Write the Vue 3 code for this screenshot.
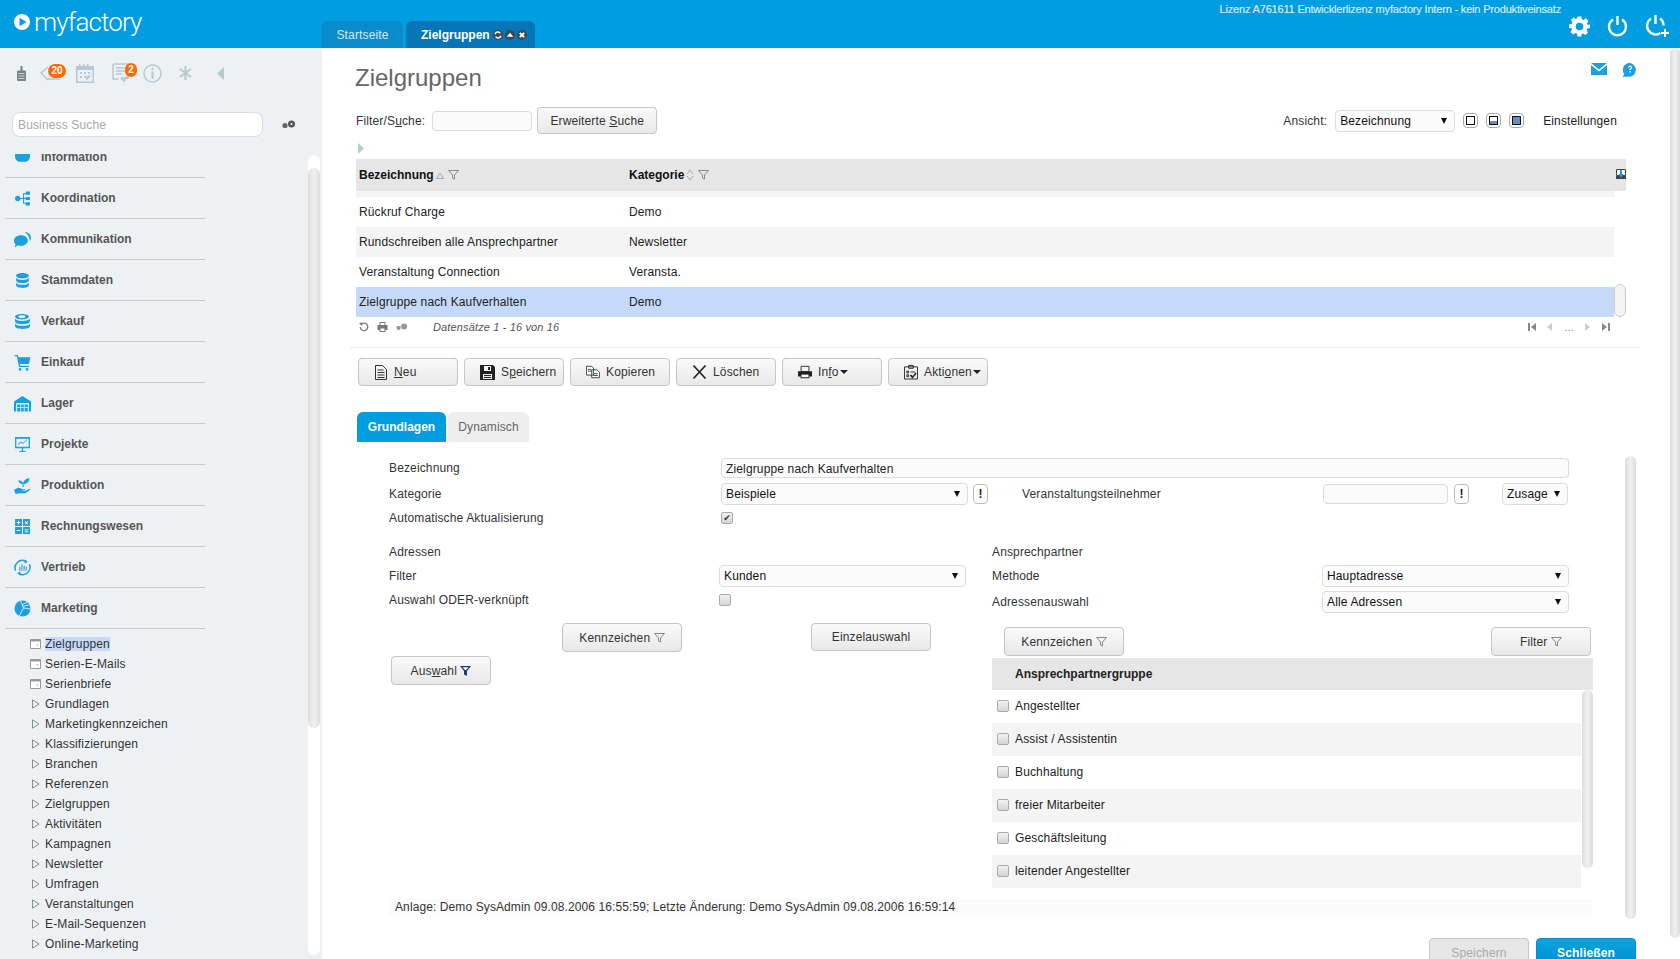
<template>
  <div class="app">
    <header class="topbar">
      <div class="logo">
        <svg width="16" height="16" viewBox="0 0 16 16"><path fill="#fff" fill-rule="evenodd" d="M8 0a8 8 0 1 1 0 16A8 8 0 0 1 8 0zM5.500 3.800v8.400L12.500 8z"/></svg>
        <span class="logo-text">myfactory</span>
      </div>
      <nav class="tabs">
        <div class="tab">Startseite</div>
        <div class="tab tab-active">
          Zielgruppen
          <span class="tab-tools">
            <svg width="10" height="10" viewBox="0 0 10 10"><circle cx="5" cy="5" r="5" fill="#3b4a55"/><path d="M2 4.200a3 3 0 0 1 5.400-.8M8 5.800a3 3 0 0 1-5.400.8" fill="none" stroke="#fff" stroke-width="1.400"/></svg>
            <svg width="10" height="10" viewBox="0 0 10 10"><circle cx="5" cy="5" r="5" fill="#3b4a55"/><path d="M1.800 6.800L5 2.800l3.200 4z" fill="#fff"/></svg>
            <svg width="10" height="10" viewBox="0 0 10 10"><circle cx="5" cy="5" r="5" fill="#3b4a55"/><path d="M2.800 2.800l4.400 4.400M7.200 2.800l-4.400 4.400" stroke="#fff" stroke-width="1.900"/></svg>
          </span>
        </div>
      </nav>
      <div class="top-right">
        <div class="licence">Lizenz A761611 Entwicklerlizenz myfactory Intern - kein Produktiveinsatz</div>
        <div class="top-icons">
          <svg width="21" height="22" viewBox="0 0 22 22"><path fill="#fff" fill-rule="evenodd" d="M9 1h4l.5 2.800 1.800.8 2.400-1.600 2.800 2.800-1.600 2.400.8 1.800L22 9.500v3.500l-2.800.5-.8 1.800 1.600 2.400-2.800 2.800-2.400-1.600-1.800.8L13 22H9l-.5-2.800-1.800-.8-2.400 1.600-2.800-2.800 1.600-2.400-.8-1.800L0 13V9.500l2.800-.5.800-1.800L2 4.800 4.800 2l2.400 1.600 1.300-.8zM11 7.500a4 4 0 1 0 0 8 4 4 0 0 0 0-8z"/></svg>
          <svg width="21" height="22" viewBox="0 0 21 22"><path fill="none" stroke="#fff" stroke-width="2.400" d="M6 4.500a8.500 8.500 0 1 0 9 0M10.500 1v9"/></svg>
          <svg width="24" height="24" viewBox="0 0 24 24"><path fill="none" stroke="#fff" stroke-width="2.400" d="M6 4.500a8.500 8.500 0 1 0 9.500 14.500M15 4.500a8.500 8.500 0 0 1 3.500 7M10.500 1v9"/><path fill="#fff" d="M19 15h2v3h3v2h-3v3h-2v-3h-3v-2h3z"/></svg>
        </div>
      </div>
    </header>

    <div class="content">
      <aside class="sidebar">
        <div class="quick-icons">
          <svg class="qi-hand" width="9" height="15" viewBox="0 0 9 15"><path fill="#77838a" d="M3.500 0h2v4.500h2c1 0 1.500.5 1.500 1.500v7.500c0 1-.5 1.500-1.500 1.500h-6C.5 15 0 14.500 0 13.500V6c0-1 .5-1.500 1.500-1.500h2z"/><path stroke="#edf1f4" stroke-width=".7" d="M1.500 7.500h6M1.500 10h6M1.500 12.500h6"/></svg>
          <span class="qi-wrap qi-mail">
            <svg width="21" height="18" viewBox="0 0 21 18"><path fill="none" stroke="#b5c9d3" stroke-width="1.500" d="M8 3L1 9l6 6h13M4 12l4 4"/></svg>
            <span class="badge badge-wide">20</span>
          </span>
          <svg class="qi-cal" width="20" height="20" viewBox="0 0 20 20"><path fill="#b5c9d3" fill-rule="evenodd" d="M1 3h3V1h1.500v2h2.500V1h1.500v2h2.500V1h1.500v2H19v17H1zM2.500 7v11.500h15V7zM5 9h2v2H5zM9 9h2v2H9zM13 9h2v2h-2zM5 13h2v2H5zM9 13h2v2H9zM13 12l3 1-4 4h-1v-2z"/></svg>
          <span class="qi-wrap qi-task">
            <svg width="19" height="20" viewBox="0 0 19 20"><path fill="none" stroke="#b5c9d3" stroke-width="1.500" d="M1 1h15v14H9M1 1v15h6M4 5h9M4 8h9M4 11h6"/><path fill="none" stroke="#b5c9d3" stroke-width="1.800" d="M9 15l3 3 3-4"/></svg>
            <span class="badge">2</span>
          </span>
          <svg class="qi-info" width="19" height="19" viewBox="0 0 19 19"><circle cx="9.500" cy="9.500" r="8.500" fill="none" stroke="#b5c9d3" stroke-width="1.500"/><path fill="#b5c9d3" d="M8.500 4h2v2h-2zM8.500 7.500h2V15h-2z"/></svg>
          <svg class="qi-star" width="13" height="14" viewBox="0 0 13 14"><path stroke="#b5c9d3" stroke-width="2" d="M6.500 0v14M1 3l11 8M12 3L1 11"/></svg>
          <svg class="qi-back" width="8" height="13" viewBox="0 0 8 13"><path fill="#b5c9d3" d="M7 0v13L0 6.500z"/></svg>
        </div>
        <div class="search-row">
          <input class="search" placeholder="Business Suche">
          <svg width="14" height="9" viewBox="0 0 14 9"><circle cx="3" cy="5.500" r="2.600" fill="#666"/><circle cx="9.500" cy="4" r="3.500" fill="#555"/><circle cx="9.500" cy="4" r="1.100" fill="#edf1f4"/></svg>
        </div>
        <div class="nav-clip">
          <ul class="nav">
            <li v-for="item in navItems" :key="item.label" class="nav-item">
              <svg class="nav-icon" width="17" height="17" viewBox="0 0 16 16">
                <path :d="item.d" fill="#1a9fe0" fill-rule="evenodd" />
                <path v-if="item.line" :d="item.line" fill="none" stroke="#1a9fe0" stroke-width="1.400" />
                <path v-if="item.cut" :d="item.cut" fill="none" stroke="#edf1f4" stroke-width="0.800" />
              </svg>
              <span>{{ item.label }}</span>
            </li>
          </ul>
          <ul class="subnav">
            <li v-for="(sub, index) in subItems" :key="index" class="sub-item">
              <svg v-if="index < 3" width="11" height="10" viewBox="0 0 11 10"><path fill="#fff" stroke="#999" d="M.5.500h10v9H.500z"/><path fill="#999" d="M.5.500h10v2H.500zM6 5l2 2v-1.500z"/></svg>
              <svg v-else width="11" height="10" viewBox="0 0 11 10"><path fill="none" stroke="#8a8a8a" d="M2.500.800v8.400L9 5z"/></svg>
              <span :class="{ 'sub-current': index === 0 }">{{ sub }}</span>
            </li>
          </ul>
        </div>
        <div class="side-scroll"><div class="side-thumb"></div></div>
      </aside>

      <main class="main">
        <div class="title-row">
          <h1>Zielgruppen</h1>
          <div class="title-icons">
            <svg width="16" height="12" viewBox="0 0 16 12"><path fill="#1a9fe0" d="M0 0h16L8 6.500zM0 2l8 6.500L16 2v10H0z"/></svg>
            <svg width="15" height="14" viewBox="0 0 15 14"><path fill="#1a9fe0" fill-rule="evenodd" d="M8 0a7 7 0 0 1 0 13.800H0c1.500-.6 2-1.800 2-3A7 7 0 0 1 8 0zM6 4.500h1.200c0-1 1.600-1 1.600 0 0 .8-1.400 1-1.400 2.600h1.300c0-1.300 1.500-1.400 1.500-2.800 0-2.200-4.200-2.200-4.200.2zM7.400 8v1.400h1.300V8z"/></svg>
          </div>
        </div>

        <div class="filter-row">
          <label>Filter/S<u>u</u>che:</label>
          <input class="field filter-input">
          <button class="btn search-btn">Erweiterte <u>S</u>uche</button>
          <label class="view-label">Ansicht:</label>
          <div class="select view-select"><select><option>Bezeichnung</option></select></div>
          <div class="view-btns">
            <span class="view-btn"><i class="pane"></i></span>
            <span class="view-btn"><i class="pane pane-half"></i></span>
            <span class="view-btn"><i class="pane pane-full"></i></span>
          </div>
          <span class="settings">Einstellungen</span>
        </div>

        <svg class="expand" width="6" height="11" viewBox="0 0 6 11"><path fill="#b5cbd8" d="M0 0l6 5.500L0 11z"/></svg>

        <div class="grid-head">
          <div class="col-one">
            <b>Bezeichnung</b>
            <svg width="8" height="7" viewBox="0 0 8 7"><path fill="none" stroke="#aaa" d="M.5 6.500L4 1l3.500 5.500z"/></svg>
            <svg class="funnel" width="11" height="10" viewBox="0 0 11 10"><path fill="none" stroke="#888" d="M.5.500h10L6.500 5v4l-2-1V5z"/></svg>
          </div>
          <div class="col-two">
            <b>Kategorie</b>
            <svg width="8" height="12" viewBox="0 0 8 12"><path fill="none" stroke="#aaa" d="M1 5l3-4 3 4M1 7l3 4 3-4"/></svg>
            <svg class="funnel" width="11" height="10" viewBox="0 0 11 10"><path fill="none" stroke="#888" d="M.5.500h10L6.500 5v4l-2-1V5z"/></svg>
          </div>
          <svg class="export" width="10" height="10" viewBox="0 0 10 10"><path fill="#fff" stroke="#444" d="M.5.500h9v6h-9z"/><path fill="#444" d="M0 7h10v3H0z"/><path fill="#1a9fe0" d="M4 1h2v4h1.500L5 9 2.500 5H4z"/></svg>
        </div>
        <div class="grid-body">
          <div class="grid-strip"></div>
          <div v-for="(row, index) in rows" :key="row.name" class="grid-row" :class="{ odd: index === 1, selected: index === 3 }">
            <div class="col-one">{{ row.name }}</div>
            <div class="col-two">{{ row.cat }}</div>
          </div>
          <div class="grid-thumb"></div>
        </div>
        <div class="grid-foot">
          <svg width="10" height="10" viewBox="0 0 10 10"><path fill="none" stroke="#777" stroke-width="1.300" d="M2 2.500A3.800 3.800 0 1 1 1.200 5"/><path fill="#777" d="M0 1l3.500-.500L3 4z"/></svg>
          <svg width="11" height="10" viewBox="0 0 11 10"><path fill="#777" d="M2.500 0h6v3h2v5h-2v2h-6V8h-2V3h2zM3.500 1v2h4V1zM3.500 6.500V9h4V6.500z"/></svg>
          <svg width="12" height="8" viewBox="0 0 14 9"><circle cx="3" cy="5.500" r="2.600" fill="#999"/><circle cx="9.500" cy="4" r="3.500" fill="#999"/></svg>
          <span class="records">Datensätze 1 - 16 von 16</span>
          <div class="pager">
            <svg width="8" height="8" viewBox="0 0 8 8"><path fill="#888" d="M0 0h2v8H0zM8 0v8L3 4z"/></svg>
            <svg width="6" height="8" viewBox="0 0 6 8"><path fill="#ccc" d="M5 0v8L0 4z"/></svg>
            <span>...</span>
            <svg width="6" height="8" viewBox="0 0 6 8"><path fill="#ccc" d="M0 0v8l5-4z"/></svg>
            <svg width="8" height="8" viewBox="0 0 8 8"><path fill="#888" d="M0 0v8l5-4zM6 0h2v8H6z"/></svg>
          </div>
        </div>
        <div class="dotted"></div>

        <div class="actions">
          <button class="btn act-btn">
            <svg width="14" height="15" viewBox="0 0 14 15"><path fill="none" stroke="#333" d="M1.500.500h7l4 4v10h-11zM3.500 5h6M3.500 7.500h7M3.500 10h7M3.500 12.500h7"/></svg>
            <span><u>N</u>eu</span>
          </button>
          <button class="btn act-btn">
            <svg width="15" height="15" viewBox="0 0 15 15"><path fill="#222" fill-rule="evenodd" d="M0 0h13l2 2v13H0zM4 1v5h7V1zM8 2h2v3H8zM3 9v5h9V9zM4 10h7v1H4zM4 12h7v1H4z"/></svg>
            <span>S<u>p</u>eichern</span>
          </button>
          <button class="btn act-btn">
            <svg width="14" height="14" viewBox="0 0 16 14"><path fill="#fff" stroke="#333" d="M.5.500h6l2 2v8h-8zM6.500 4.500h6l3 3v6h-9z"/><path stroke="#333" d="M2 4h4M2 6h4M8.500 9h5M8.500 11h5"/></svg>
            <span>Kopieren</span>
          </button>
          <button class="btn act-btn">
            <svg width="15" height="14" viewBox="0 0 14 14"><path stroke="#222" stroke-width="1.600" d="M1 .500l12 13M13 .500l-12 13"/></svg>
            <span>Löschen</span>
          </button>
          <button class="btn act-btn">
            <svg width="14" height="14" viewBox="0 0 16 14"><path fill="none" stroke="#222" d="M3.500.500h9v6h-9z"/><path fill="#222" d="M0 6h16v6h-3v2H3v-2H0z"/><path fill="#fff" d="M4 10h8v3H4z"/></svg>
            <span class="caret-text">In<u>f</u>o<i class="caret"></i></span>
          </button>
          <button class="btn act-btn">
            <svg width="14" height="16" viewBox="0 0 15 16"><path fill="none" stroke="#222" d="M.5 2.500h14v13H.500zM5 1h5v3H5zM3 7h2v2H3zM3 11h2v2H3zM7 8h5M7 12h2"/><path fill="none" stroke="#222" stroke-width="1.600" d="M7 11l2 3 4-5"/></svg>
            <span class="caret-text">Akti<u>o</u>nen<i class="caret"></i></span>
          </button>
        </div>

        <div class="form-tabs">
          <div class="form-tab form-tab-active">Grundlagen</div>
          <div class="form-tab">Dynamisch</div>
        </div>

        <section class="form">
          <div class="form-row row-name">
            <span class="form-label">Bezeichnung</span>
            <input class="field name-input" value="Zielgruppe nach Kaufverhalten">
          </div>
          <div class="form-row row-cat">
            <span class="form-label">Kategorie</span>
            <div class="select cat-select"><select><option>Beispiele</option></select></div>
            <button class="bang">!</button>
            <span class="guest-label">Veranstaltungsteilnehmer</span>
            <input class="field guest-input">
            <button class="bang guest-bang">!</button>
            <div class="select zusage-select"><select><option>Zusage</option></select></div>
          </div>
          <div class="form-row row-auto">
            <span class="form-label">Automatische Aktualisierung</span>
            <input class="check" type="checkbox" checked>
          </div>

          <div class="columns">
            <div class="col-left">
              <div class="line">Adressen</div>
              <div class="form-row row-select left-row">
                <span class="left-label">Filter</span>
                <div class="select wide-select"><select><option>Kunden</option></select></div>
              </div>
              <div class="form-row row-or left-row">
                <span class="left-label">Auswahl ODER-verknüpft</span>
                <input class="check" type="checkbox">
              </div>
              <div class="left-btns">
                <button class="btn flag-btn">Kennzeichen <svg width="11" height="10" viewBox="0 0 11 10"><path fill="none" stroke="#888" d="M.5.500h10L6.500 5v4l-2-1V5z"/></svg></button>
                <button class="btn single-btn">Einzelauswahl</button>
              </div>
              <button class="btn pick-btn">Aus<u>w</u>ahl <svg width="11" height="10" viewBox="0 0 11 10"><path fill="#1b3a7a" d="M0 0h11L7 5v5L4 8.500V5z"/><path fill="#fff" d="M2.500 1.200h6L6 4H5z"/></svg></button>
            </div>

            <div class="col-right">
              <div class="line">Ansprechpartner</div>
              <div class="form-row row-select right-row">
                <span class="right-label">Methode</span>
                <div class="select wide-select"><select><option>Hauptadresse</option></select></div>
              </div>
              <div class="form-row row-select right-row row-addr">
                <span class="right-label">Adressenauswahl</span>
                <div class="select wide-select"><select><option>Alle Adressen</option></select></div>
              </div>
              <div class="right-btns">
                <button class="btn flag-btn">Kennzeichen <svg width="11" height="10" viewBox="0 0 11 10"><path fill="none" stroke="#888" d="M.5.500h10L6.500 5v4l-2-1V5z"/></svg></button>
                <button class="btn filter-btn">Filter <svg width="11" height="10" viewBox="0 0 11 10"><path fill="none" stroke="#888" d="M.5.500h10L6.500 5v4l-2-1V5z"/></svg></button>
              </div>
              <div class="group-head">Ansprechpartnergruppe</div>
              <div class="group-list">
                <div v-for="(group, index) in groups" :key="group" class="group-row" :class="{ odd: index % 2 === 1 }">
                  <input class="check" type="checkbox">
                  <span>{{ group }}</span>
                </div>
                <div class="group-thumb"></div>
              </div>
            </div>
          </div>

          <div class="created">Anlage: Demo SysAdmin 09.08.2006 16:55:59; Letzte Änderung: Demo SysAdmin 09.08.2006 16:59:14</div>
          <div class="form-scroll"></div>
        </section>

        <div class="bottom-btns">
          <button class="btn bottom-btn disabled">Speichern</button>
          <button class="btn bottom-btn primary">Schließen</button>
        </div>
        <div class="page-scroll"></div>
      </main>
    </div>
  </div>
</template>

<script setup>
const navItems = [
  { label: 'Information', d: 'M1 1h5l2 2 2-2h5v6c0 3-2 5-5 5H6c-3 0-5-2-5-5z' },
  { label: 'Koordination', d: 'M1 8a2.500 2.500 0 1 0 5 0 2.500 2.500 0 1 0-5 0zM6 7.500h2.500V3H11v1h-1.500v3.500H11v1H9.500V12H11v1H8.500V8.500H6zM11 1.500h4v3h-4zM11 6.500h4v3h-4zM11 11.500h4v3h-4z' },
  { label: 'Kommunikation', d: 'M0 9c0-3 3-5 6.500-5S13 6 13 9s-3 5-6.500 5c-1 0-2-.2-2.800-.5L.5 15.500l1-3C.5 11.500 0 10.300 0 9zM10 1c3.500 0 6 2.500 6 5.500 0 1.200-.4 2.300-1.100 3.200.1-3.500-2-7-4.900-8.700z' },
  { label: 'Stammdaten', d: 'M2 3.500C2 2 5 1 8 1s6 1 6 2.500S11 6 8 6 2 5 2 3.500zM2 5.500C3 7 5.500 7.500 8 7.500s5-.5 6-2V8c0 1.500-3 2.500-6 2.500S2 9.500 2 8zM2 10c1 1.500 3.500 2 6 2s5-.5 6-2v2.500c0 1.500-3 2.500-6 2.500s-6-1-6-2.500z' },
  { label: 'Verkauf', d: 'M1 3.500C1 2 4 1 7.500 1S14 2 14 3.500 11 6 7.500 6 1 5 1 3.500zM4 3.500c0 .8 1.500 1.300 3.500 1.300s3.500-.5 3.500-1.300-1.500-1.300-3.500-1.300S4 2.700 4 3.500zM1 5.500C2 7 4.500 7.500 7.500 7.500s6-.5 7.500-2V8c0 1.500-3.500 2.500-7.500 2.500S1 9.500 1 8zM1 10c1 1.500 3.500 2 7 2s6-.5 7-2v2.500c0 1.500-3 2.500-7 2.500s-7-1-7-2.500z' },
  { label: 'Einkauf', d: 'M.5 1h3.200l.6 2H15.500L14 9.500H5.500l.3 1.500H14v1.200H4.700L2.700 2.200H.5zM4.500 14.500a1.300 1.300 0 1 0 2.600 0 1.300 1.300 0 1 0-2.600 0zM11 14.500a1.300 1.300 0 1 0 2.600 0 1.300 1.300 0 1 0-2.600 0z' },
  { label: 'Lager', d: 'M0 6l8-5 8 5v9.500h-2V7.500H2v8H0zM3 9h3v2.500H3zM6.800 9h2.400v2.500H6.800zM10 9h3v2.500h-3zM3 12.300h3v3.200H3zM6.800 12.300h2.400v3.200H6.800zM10 12.300h3v3.200h-3z' },
  { label: 'Projekte', d: 'M1 1h14v10.500H1zM2.200 2.500v7.500h11.600V2.500zM7.400 11.500h1.200V14H11v1H5v-1h2.400zM3.500 8l3-3 2 1.500 3.500-3.500.5.5-4 4-2-1.500L4 8.500z' },
  { label: 'Produktion', d: 'M0 12l3-1.500c1-.5 2-.3 3 .2l2 .8h2c.8 0 .8 1.200 0 1.200H7.500l.5.500h2.500l4-2c.8-.3 1.200.5.5 1l-4.500 3H5L1.500 16zM8 9.500V6.500C6 6.500 4.500 5.500 4 3c2.500 0 4 1 4.500 3C9 3.500 11 1.500 14.500 1c0 3.500-2 5.500-5.500 5.800V9.500z' },
  { label: 'Rechnungswesen', d: 'M1 1h6.500v6.500H1zM8.500 1H15v6.500H8.500zM1 8.500h6.500V15H1zM8.500 8.500H15V15H8.500zM3.700 2.500h1v1.300H6v1H4.700v1.300h-1V4.800H2.500v-1h1.200zM10.500 2.800l1.200 1.200 1.200-1.200.6.600-1.200 1.200 1.200 1.200-.6.600-1.200-1.200-1.200 1.200-.6-.6 1.200-1.200-1.200-1.200zM2.500 11.200H6v1H2.500zM10 10.500h3.500v1H10zM10 12.500h3.500v1H10z' },
  { label: 'Vertrieb', d: 'M5 7h1v4H5zM7 5h1v6H7zM9 6h1v5H9zM11 7h1v4h-1zM10 .5l3 2-3 2zM6 11.500l-3 2 3 2z', line: 'M1.500 11A7 7 0 0 1 11 2M14.500 5A7 7 0 0 1 5 14' },
  { label: 'Marketing', d: 'M8 .5a7.500 7.500 0 1 1 0 15 7.500 7.500 0 0 1 0-15z', cut: 'M5 15L9 7.500l6.500 1M9 7.500L6 .5M7.500 4.500l5-2.500M8.500 6l6-1.500' },
];

const subItems = [
  'Zielgruppen', 'Serien-E-Mails', 'Serienbriefe', 'Grundlagen', 'Marketingkennzeichen',
  'Klassifizierungen', 'Branchen', 'Referenzen', 'Zielgruppen', 'Aktivitäten', 'Kampagnen',
  'Newsletter', 'Umfragen', 'Veranstaltungen', 'E-Mail-Sequenzen', 'Online-Marketing',
];

const rows = [
  { name: 'Rückruf Charge', cat: 'Demo' },
  { name: 'Rundschreiben alle Ansprechpartner', cat: 'Newsletter' },
  { name: 'Veranstaltung Connection', cat: 'Veransta.' },
  { name: 'Zielgruppe nach Kaufverhalten', cat: 'Demo' },
];

const groups = ['Angestellter', 'Assist / Assistentin', 'Buchhaltung', 'freier Mitarbeiter', 'Geschäftsleitung', 'leitender Angestellter'];
</script>

<style>
html, body { margin: 0; background: #fff; }
</style>

<style scoped>
.app {
  width: 1680px;
  height: 959px;
  overflow: hidden;
  font-family: "Liberation Sans", Arial, sans-serif;
  font-size: 12px;
  letter-spacing: 0.14px;
  color: #333;
}
b, .nav-item, .group-head, .tab-active, .form-tab-active, .primary { letter-spacing: 0; }

/* Kopfzeile */
.topbar {
  height: 48px;
  background: #009de0;
  display: flex;
}
.logo {
  width: 322px;
  display: flex;
  align-items: center;
  gap: 4px;
  padding: 0 0 4px 14px;
  box-sizing: border-box;
  color: #fff;
}
.logo-text {
  font-family: Roboto, sans-serif;
  font-weight: 300;
  font-size: 26px;
  letter-spacing: -0.9px;
}
.tabs {
  display: flex;
  align-items: flex-end;
  gap: 3px;
}
.tab {
  height: 27px;
  line-height: 28px;
  width: 81px;
  text-align: center;
  background: #0a8bcc;
  color: #d5ecf7;
  border-radius: 6px 6px 0 0;
}
.tab-active {
  width: 129px;
  box-sizing: border-box;
  padding: 1px 0 0 15px;
  text-align: left;
  background: #0676b8;
  color: #fff;
  font-weight: bold;
  display: flex;
  align-items: center;
  gap: 3px;
}
.tab-tools { display: flex; gap: 2px; }
.top-right {
  flex: 1;
  padding-right: 11px;
  text-align: right;
}
.licence {
  font-size: 11px;
  color: #d3ecf8;
  margin: 3px 0 0;
  padding-right: 108px;
  line-height: 13px;
  letter-spacing: -0.18px;
  -webkit-text-stroke: 0.2px #d3ecf8;
}
.top-icons {
  display: flex;
  justify-content: flex-end;
  align-items: center;
  gap: 17px;
  height: 22px;
  margin-top: -1px;
}

/* Seitenleiste */
.content { display: flex; height: 911px; }
.sidebar {
  width: 322px;
  flex: none;
  background: #edf1f4;
  position: relative;
  overflow: hidden;
}
.quick-icons {
  height: 64px;
  display: flex;
  align-items: center;
  padding: 0 0 14px 17px;
  box-sizing: border-box;
}
.qi-wrap { position: relative; display: block; }
.qi-mail { margin-left: 14px; width: 21px; height: 18px; }
.qi-cal { margin-left: 14px; }
.qi-task { margin-left: 17px; width: 19px; height: 20px; }
.qi-info { margin-left: 12px; }
.qi-star { margin-left: 17px; }
.qi-back { margin-left: 25px; }
.badge {
  position: absolute;
  top: 0;
  left: 13px;
  min-width: 12px;
  height: 14px;
  line-height: 14px;
  border-radius: 7px;
  background: #ff6a00;
  color: #fff;
  font-size: 10px;
  font-weight: bold;
  letter-spacing: 0;
  text-align: center;
}
.qi-mail .badge { left: 8px; }
.badge-wide { min-width: 18px; }
.search-row {
  display: flex;
  align-items: center;
  gap: 19px;
  padding-left: 12px;
  height: 25px;
}
.search {
  width: 251px;
  height: 25px;
  box-sizing: border-box;
  border: 1px solid #dcdcdc;
  border-radius: 8px;
  padding: 0 5px;
  font: 12px "Liberation Sans", Arial, sans-serif;
  letter-spacing: 0.14px;
  outline: none;
}
.search::placeholder { color: #a8a8a8; }
.nav-clip {
  height: 805px;
  margin-top: 17px;
  overflow: hidden;
}
.nav, .subnav { list-style: none; margin: 0; padding: 0; }
.nav { margin-top: -17px; }
.nav-item {
  width: 200px;
  height: 41px;
  box-sizing: border-box;
  margin-left: 5px;
  border-bottom: 1px solid #c8ccd0;
  display: flex;
  align-items: center;
  gap: 10px;
  padding-left: 9px;
  font-weight: bold;
  color: #555;
}
.subnav {
  width: 200px;
  margin-left: 5px;
  padding: 5px 0 5px;
  border-bottom: 1px solid #c8ccd0;
}
.sub-item {
  height: 20px;
  display: flex;
  align-items: center;
  gap: 4px;
  padding-left: 25px;
  color: #333;
}
.sub-current { background: #c4daf8; }
.side-scroll {
  position: absolute;
  left: 308px;
  top: 107px;
  width: 12px;
  height: 800px;
  border-radius: 6px;
  background: #fff;
}
.side-thumb {
  height: 560px;
  margin-top: 13px;
  border-radius: 6px;
  background: linear-gradient(90deg, #dcdcdc, #f0f0f0 50%, #dcdcdc);
}

/* Hauptbereich */
.main {
  flex: 1;
  position: relative;
  overflow: hidden;
  padding-left: 34px;
  background: #fff;
}
.title-row {
  width: 1281px;
  height: 59px;
  display: flex;
  justify-content: space-between;
}
h1 {
  margin: 15px 0 0 -1px;
  font-size: 24px;
  line-height: 30px;
  font-weight: normal;
  letter-spacing: 0;
  color: #666;
}
.title-icons {
  display: flex;
  gap: 15px;
  align-items: flex-start;
  padding-top: 15px;
}
.filter-row {
  width: 1270px;
  height: 27px;
  display: flex;
  align-items: center;
}
.field {
  box-sizing: border-box;
  border: 1px solid #dcdcdc;
  border-radius: 4px;
  background: #fbfbfb;
  font: 12px "Liberation Sans", Arial, sans-serif;
  letter-spacing: 0.14px;
  color: #222;
  outline: none;
}
.filter-input { width: 100px; height: 20px; margin-left: 7px; }
.btn {
  box-sizing: border-box;
  border: 1px solid #c6c6c6;
  border-radius: 4px;
  background: linear-gradient(#fafafa, #e8e8e8);
  font: 12px "Liberation Sans", Arial, sans-serif;
  letter-spacing: 0.14px;
  color: #333;
  padding: 0;
}
.search-btn { width: 120px; height: 27px; margin-left: 5px; }
.view-label { margin-left: auto; }
.select {
  position: relative;
  box-sizing: border-box;
  height: 22px;
}
.select select {
  width: 100%;
  height: 100%;
  box-sizing: border-box;
  border: 1px solid #dcdcdc;
  border-radius: 4px;
  background: #fbfbfb;
  font: 12px "Liberation Sans", Arial, sans-serif;
  letter-spacing: 0.14px;
  color: #111;
  padding: 0 0 0 4px;
  appearance: none;
  outline: none;
}
.select::after {
  content: "";
  position: absolute;
  right: 8px;
  top: 8px;
  border-left: 3px solid transparent;
  border-right: 3px solid transparent;
  border-top: 6px solid #111;
  pointer-events: none;
}
.view-select { width: 120px; margin-left: 8px; }
.view-btns { display: flex; gap: 8px; margin-left: 8px; }
.view-btn {
  width: 15px;
  height: 15px;
  box-sizing: border-box;
  border: 1px solid #aaa;
  border-radius: 4px;
  display: flex;
  align-items: center;
  justify-content: center;
}
.pane {
  display: block;
  width: 9px;
  height: 9px;
  box-sizing: border-box;
  border: 1px solid #111;
  background: #fff;
}
.pane-half { background: linear-gradient(#fff 50%, #6c8ebf 50%); }
.pane-full { background: #6c8ebf; }
.settings { margin-left: 19px; padding-right: 9px; color: #222; }
.expand { display: block; margin: 9px 0 5px 2px; }

.grid-head {
  width: 1270px;
  height: 32px;
  background: #e6e6e6;
  display: flex;
  align-items: center;
  position: relative;
  color: #111;
}
.col-one {
  width: 273px;
  padding-left: 3px;
  box-sizing: border-box;
  display: flex;
  align-items: center;
  gap: 2px;
}
.col-two { display: flex; align-items: center; gap: 2px; }
.funnel { margin-left: 2px; }
.export { position: absolute; right: 0; top: 10px; }
.grid-body { width: 1270px; position: relative; color: #222; }
.grid-strip { width: 1258px; height: 6px; background: #f4f4f4; }
.grid-row {
  width: 1258px;
  height: 30px;
  display: flex;
  align-items: center;
}
.grid-row.odd { background: #f4f4f4; }
.grid-row.selected { background: #c4daf8; }
.grid-thumb {
  position: absolute;
  right: 0;
  bottom: 0;
  width: 12px;
  height: 33px;
  box-sizing: border-box;
  border: 1px solid #ccc;
  border-radius: 6px;
  background: #f3f3f3;
}
.grid-foot {
  width: 1251px;
  height: 20px;
  padding-left: 3px;
  display: flex;
  align-items: center;
  gap: 8px;
}
.records {
  margin-left: 17px;
  font-size: 11px;
  font-style: italic;
  color: #555;
}
.pager {
  margin-left: auto;
  display: flex;
  align-items: center;
  gap: 11px;
  color: #777;
  font-size: 11px;
}
.dotted {
  width: 1289px;
  margin: 10px 0 0 -5px;
  border-top: 1px dotted #ddd;
}
.actions { display: flex; gap: 6px; margin: 10px 0 0 2px; }
.act-btn {
  width: 100px;
  height: 28px;
  padding-left: 15px;
  display: flex;
  align-items: center;
  gap: 6px;
}
.caret {
  display: inline-block;
  margin-left: 1px;
  vertical-align: 2px;
  border-left: 4px solid transparent;
  border-right: 4px solid transparent;
  border-top: 4px solid #222;
}
.form-tabs { display: flex; gap: 2px; margin: 26px 0 0 1px; }
.form-tab {
  width: 81px;
  height: 30px;
  line-height: 30px;
  text-align: center;
  background: #eee;
  color: #666;
  border-radius: 6px 6px 0 0;
}
.form-tab-active {
  width: 89px;
  background: #009de0;
  color: #fff;
  font-weight: bold;
}

/* Formular */
.form { position: relative; padding: 16px 0 0 33px; color: #333; }
.form-row { display: flex; align-items: center; }
.form-label { width: 332px; flex: none; }
.row-name { height: 20px; }
.name-input { width: 848px; height: 20px; padding: 1px 4px 0; }
.row-cat { height: 22px; margin-top: 5px; }
.cat-select { width: 247px; }
.bang {
  width: 15px;
  height: 20px;
  margin-left: 5px;
  padding: 0;
  border: 1px solid #bbb;
  border-radius: 4px;
  background: #fff;
  font: bold 12px "Liberation Sans", Arial, sans-serif;
  color: #222;
}
.guest-label { width: 301px; margin-left: 34px; }
.guest-input { width: 125px; height: 20px; }
.guest-bang { margin-left: 6px; }
.zusage-select { width: 66px; margin-left: 33px; }
.row-auto { height: 22px; margin-top: 2px; }
.check {
  appearance: none;
  width: 12px;
  height: 12px;
  margin: 0;
  flex: none;
  box-sizing: border-box;
  border: 1px solid #aaa;
  border-radius: 2px;
  background: linear-gradient(#f2f2f2, #d4d4d4);
  display: flex;
  align-items: center;
  justify-content: center;
}
.check:checked::after {
  content: "✔";
  font: 9px/10px "DejaVu Sans", sans-serif;
  color: #333;
}
.columns { display: flex; margin-top: 12px; height: 348px; }
.col-left { width: 603px; flex: none; }
.col-right { width: 601px; flex: none; }
.line { height: 22px; line-height: 22px; }
.row-select { height: 22px; margin-top: 2px; }
.left-label { width: 330px; flex: none; }
.right-label { width: 330px; flex: none; }
.wide-select { width: 247px; }
.row-or { height: 22px; margin-top: 2px; }
.row-addr { margin-top: 4px; }
.left-btns { display: flex; margin: 12px 0 0 173px; gap: 129px; }
.flag-btn { width: 120px; height: 29px; }
.flag-btn svg, .filter-btn svg, .pick-btn svg { vertical-align: -1px; }
.single-btn { width: 120px; height: 28px; }
.pick-btn { display: block; width: 100px; height: 29px; margin: 4px 0 0 2px; }
.right-btns {
  display: flex;
  justify-content: space-between;
  margin: 14px 2px 0 12px;
}
.filter-btn { width: 100px; height: 29px; }
.group-head {
  height: 32px;
  line-height: 33px;
  margin-top: 2px;
  padding-left: 23px;
  background: #e6e6e6;
  font-weight: bold;
  color: #222;
}
.group-list { position: relative; }
.group-row {
  width: 589px;
  height: 33px;
  display: flex;
  align-items: center;
  gap: 6px;
  padding: 0 0 2px 5px;
  box-sizing: border-box;
  color: #222;
}
.group-row.odd { background: #f4f4f4; }
.group-thumb {
  position: absolute;
  right: 0;
  top: 0;
  width: 11px;
  height: 178px;
  border-radius: 6px;
  background: linear-gradient(90deg, #dcdcdc, #f0f0f0 50%, #dcdcdc);
}
.created {
  width: 1197px;
  height: 19px;
  line-height: 19px;
  margin-top: 9px;
  padding-left: 6px;
  background: #fbfbfb;
  letter-spacing: 0.1px;
}
.form-scroll {
  position: absolute;
  left: 1269px;
  top: 14px;
  width: 11px;
  height: 463px;
  border-radius: 6px;
  background: linear-gradient(90deg, #dcdcdc, #f0f0f0 50%, #dcdcdc);
}
.bottom-btns {
  display: flex;
  gap: 7px;
  margin: 21px 0 0 1073px;
}
.bottom-btn { width: 100px; height: 30px; flex: none; }
.disabled { color: #aaa; background: #e6e6e6; }
.primary {
  background: linear-gradient(#0aa3e4, #008ccc);
  border-color: #0a8bcc;
  color: #fff;
  font-weight: bold;
}
.page-scroll {
  position: absolute;
  right: 0;
  top: 0;
  width: 10px;
  height: 890px;
  border-radius: 5px;
  background: linear-gradient(90deg, #dcdcdc, #f0f0f0 50%, #dcdcdc);
}
</style>
